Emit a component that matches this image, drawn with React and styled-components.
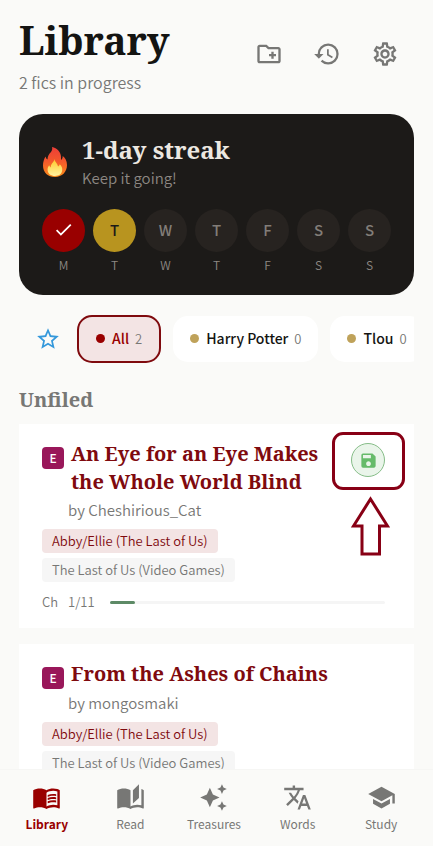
import React, { useState } from 'react'
import styled, { createGlobalStyle } from 'styled-components'
import {
  MdOutlineCreateNewFolder,
  MdHistory,
  MdOutlineSettings,
  MdStarBorder,
  MdSave,
  MdMenuBook,
  MdAutoStories,
  MdAutoAwesome,
  MdTranslate,
  MdSchool,
  MdCheck,
} from 'react-icons/md'

const color = {
  page: '#fafaf8',
  white: '#ffffff',
  ink: '#141412',
  dark: '#1c1a18',
  grey: '#777775',
  red: '#990000',
  deepRed: '#7f0a0e',
  blush: '#f3e4e4',
  gold: '#b8941f',
  marker: '#880015',
}

const sans = `"Noto Sans CJK SC", "Noto Sans", sans-serif`
const serif = `"Noto Serif", "DejaVu Serif", serif`

const days = [
  { letter: 'M', state: 'done' },
  { letter: 'T', state: 'today' },
  { letter: 'W' },
  { letter: 'T' },
  { letter: 'F' },
  { letter: 'S' },
  { letter: 'S' },
]

const folders = [
  { name: 'All', count: 2 },
  { name: 'Harry Potter', count: 0 },
  { name: 'Tlou', count: 0 },
]

const fics = [
  {
    title: 'An Eye for an Eye Makes the Whole World Blind',
    author: 'Cheshirious_Cat',
    ship: 'Abby/Ellie (The Last of Us)',
    fandom: 'The Last of Us (Video Games)',
    chapter: 1,
    total: 11,
    saved: true,
  },
  {
    title: 'From the Ashes of Chains',
    author: 'mongosmaki',
    ship: 'Abby/Ellie (The Last of Us)',
    fandom: 'The Last of Us (Video Games)',
  },
]

const tabs = [
  { text: 'Library', Icon: MdMenuBook },
  { text: 'Read', Icon: MdAutoStories },
  { text: 'Treasures', Icon: MdAutoAwesome },
  { text: 'Words', Icon: MdTranslate },
  { text: 'Study', Icon: MdSchool },
]

const Flame = () => (
  <svg width="26" height="30" viewBox="0 0 26 30" aria-hidden="true">
    <defs>
      <linearGradient id="flame" x1="0" y1="0" x2="0" y2="1">
        <stop offset="0" stopColor="#ec3d38" />
        <stop offset="0.45" stopColor="#f4572c" />
        <stop offset="1" stopColor="#fb8c1a" />
      </linearGradient>
      <linearGradient id="core" x1="0" y1="0" x2="0" y2="1">
        <stop offset="0" stopColor="#ffc928" />
        <stop offset="1" stopColor="#fff3a0" />
      </linearGradient>
    </defs>
    <path
      d="M10 0c5 1 9 5 9 10 0 1 0 2 .2 3 1-.8 1.6-2.200 1.500-4C23 10.500 25 14 25 18c0 7-5 12-12 12S1 25.500 1 18.500C1 15 2 12 3.500 9.500c.5 1.500 1 2.500 2 3C5.500 9 7 7 9 5c1.200-1.600 1.500-3.300 1-5z"
      fill="url(#flame)"
    />
    <path
      d="M12.500 12c.2 3 3 4 3.500 7.500 1-.5 1.500-1.200 1.700-2.200C19.500 19 20.500 21 20.200 23.300 19.800 27 17 29 13 29s-7.200-2.300-7.400-6c-.1-2 .6-3.500 1.600-4.700.3 1 .8 1.700 1.600 2.100C8.500 16.500 12 15.500 12.500 12z"
      fill="url(#core)"
    />
  </svg>
)

const FicCard = ({ fic }) => (
  <Card>
    <CardTop>
      <Rating>E</Rating>
      <FicTitle>{fic.title}</FicTitle>
      {fic.saved && (
        <SaveSpot>
          <SaveButton type="button" aria-label="Saved offline">
            <MdSave size={19} />
          </SaveButton>
          <Ring />
          <Arrow width="39" height="60" viewBox="0 0 39 60" aria-hidden="true">
            <path d="M19.500 3L2.500 30H11V58H28.500V30H36.500Z" />
          </Arrow>
        </SaveSpot>
      )}
    </CardTop>
    <Author>by {fic.author}</Author>
    <Tags>
      <Tag $ship>{fic.ship}</Tag>
      <Tag>{fic.fandom}</Tag>
    </Tags>
    {fic.chapter && (
      <Progress>
        <Chapter>
          Ch <Count>{fic.chapter}/{fic.total}</Count>
        </Chapter>
        <Track>
          <Fill style={{ width: `${(fic.chapter / fic.total) * 100}%` }} />
        </Track>
      </Progress>
    )}
  </Card>
)

const App = () => {
  const [folder, setFolder] = useState('All')
  const [tab, setTab] = useState('Library')

  return (
    <Screen>
      <GlobalStyle />
      <Main>
        <Header>
          <div>
            <PageTitle>Library</PageTitle>
            <Subtitle>2 fics in progress</Subtitle>
          </div>
          <Actions>
            <IconButton type="button" aria-label="New folder">
              <MdOutlineCreateNewFolder size={28} />
            </IconButton>
            <IconButton type="button" aria-label="History">
              <MdHistory size={28} />
            </IconButton>
            <IconButton type="button" aria-label="Settings">
              <MdOutlineSettings size={28} />
            </IconButton>
          </Actions>
        </Header>

        <Streak>
          <StreakTop>
            <Flame />
            <div>
              <StreakTitle>1-day streak</StreakTitle>
              <StreakText>Keep it going!</StreakText>
            </div>
          </StreakTop>
          <Week>
            {days.map((day, index) => (
              <Day key={index}>
                <Dot $state={day.state}>
                  {day.state === 'done' ? <MdCheck size={21} /> : day.letter}
                </Dot>
                <DayLabel>{day.letter}</DayLabel>
              </Day>
            ))}
          </Week>
        </Streak>

        <Folders>
          <StarButton type="button" aria-label="Favourites">
            <MdStarBorder size={26} />
          </StarButton>
          {folders.map((item) => (
            <Chip
              key={item.name}
              type="button"
              $active={item.name === folder}
              onClick={() => setFolder(item.name)}
            >
              <Bullet $active={item.name === folder} />
              {item.name}
              <ChipCount>{item.count}</ChipCount>
            </Chip>
          ))}
        </Folders>

        <SectionTitle>Unfiled</SectionTitle>
        <List>
          {fics.map((fic) => (
            <FicCard key={fic.title} fic={fic} />
          ))}
        </List>
      </Main>

      <Nav>
        {tabs.map(({ text, Icon }) => (
          <NavButton
            key={text}
            type="button"
            $active={text === tab}
            onClick={() => setTab(text)}
          >
            <Icon size={29} />
            {text}
          </NavButton>
        ))}
      </Nav>
    </Screen>
  )
}

const GlobalStyle = createGlobalStyle`
* {
  box-sizing: border-box;
}
body {
  margin: 0;
  background: ${color.page};
  color: ${color.ink};
  font-family: ${sans};
}
h1, h2, h3, p {
  margin: 0;
}
button {
  border: 0;
  padding: 0;
  background: none;
  font: inherit;
  color: inherit;
  cursor: pointer;
}
svg {
  flex: none;
}
`

const Screen = styled.div`
  display: flex;
  flex-direction: column;
  height: 100vh;
`

const Main = styled.main`
  flex: 1;
  min-height: 0;
  overflow-y: auto;
  scrollbar-width: none;
  padding: 15px 19px 0;
`

const Header = styled.header`
  display: flex;
  justify-content: space-between;
  align-items: flex-start;
`

const PageTitle = styled.h1`
  font: 700 39px/50px ${serif};
`

const Subtitle = styled.p`
  margin-top: 5px;
  font-size: 16px;
  line-height: 24px;
  font-weight: 350;
  color: ${color.grey};
`

const Actions = styled.div`
  display: flex;
  margin-top: 15px;
`

const IconButton = styled.button`
  display: flex;
  justify-content: center;
  align-items: center;
  width: 58px;
  height: 48px;
  color: ${color.grey};
`

const Streak = styled.section`
  margin-top: 20px;
  padding: 20px 23px 21px;
  border-radius: 24px;
  background: ${color.dark};
`

const StreakTop = styled.div`
  display: flex;
  align-items: center;
  gap: 14px;
`

const StreakTitle = styled.h2`
  font: 700 24px/32px ${serif};
  color: #ece8e1;
`

const StreakText = styled.p`
  font-size: 15px;
  line-height: 24px;
  font-weight: 350;
  color: #8d8883;
`

const Week = styled.div`
  display: flex;
  justify-content: space-between;
  margin-top: 19px;
`

const Day = styled.div`
  display: flex;
  flex-direction: column;
  align-items: center;
  gap: 4px;
`

const dotFill = { done: color.red, today: color.gold }
const dotText = { done: '#ffffff', today: color.dark }

const Dot = styled.div`
  display: flex;
  justify-content: center;
  align-items: center;
  width: 43px;
  height: 43px;
  border-radius: 50%;
  font-size: 15px;
  line-height: 20px;
  padding-bottom: 2px;
  font-weight: 500;
  background: ${({ $state }) => dotFill[$state] || '#272320'};
  color: ${({ $state }) => dotText[$state] || '#827d78'};
`

const DayLabel = styled.span`
  font-size: 12px;
  line-height: 18px;
  font-weight: 350;
  color: #8d8883;
`

const Folders = styled.div`
  display: flex;
  align-items: center;
  gap: 12px;
  margin-top: 20px;
  overflow-x: auto;
  scrollbar-width: none;
`

const StarButton = styled.button`
  display: flex;
  flex: none;
  justify-content: flex-end;
  width: 46px;
  padding-right: 4px;
  color: #3498db;
`

const Chip = styled.button`
  display: flex;
  flex: none;
  align-items: center;
  height: ${({ $active }) => ($active ? 48 : 46)}px;
  padding: 0 17px 2px;
  border: ${({ $active }) => ($active ? `2px solid ${color.deepRed}` : '0')};
  border-radius: 15px;
  background: ${({ $active }) => ($active ? color.blush : color.white)};
  color: ${({ $active }) => ($active ? color.red : color.ink)};
  font-size: 14px;
  font-weight: 500;
`

const Bullet = styled.span`
  width: 9px;
  height: 9px;
  margin-right: 7px;
  border-radius: 50%;
  background: ${({ $active }) => ($active ? color.red : '#bfa25a')};
`

const ChipCount = styled.span`
  margin-left: 6px;
  font-size: 13px;
  font-weight: 350;
  color: ${color.grey};
`

const SectionTitle = styled.h2`
  margin-top: 23px;
  font: 700 20px/28px ${serif};
  color: ${color.grey};
`

const List = styled.div`
  display: flex;
  flex-direction: column;
  gap: 16px;
  margin-top: 10px;
`

const Card = styled.article`
  padding: 16px 29px 14px 23px;
  background: ${color.white};
`

const CardTop = styled.div`
  display: flex;
  align-items: flex-start;
`

const Rating = styled.span`
  flex: none;
  width: 22px;
  height: 22px;
  margin: 7px 7px 0 0;
  border-radius: 4px;
  background: #99175a;
  color: ${color.white};
  font-size: 12px;
  font-weight: 500;
  line-height: 21px;
  text-align: center;
`

const FicTitle = styled.h3`
  flex: 1;
  font: 700 20px/28px ${serif};
  color: ${color.deepRed};
`

const SaveSpot = styled.div`
  position: relative;
  margin: 3px 0 0 29px;
`

const SaveButton = styled.button`
  display: flex;
  justify-content: center;
  align-items: center;
  width: 34px;
  height: 34px;
  border: 1px solid #86bd88;
  border-radius: 50%;
  background: #eaf5ea;
  color: #66bb6a;
`

/* hand-drawn style callout over the save button */
const Ring = styled.span`
  position: absolute;
  inset: -11px -20px -13px -19px;
  border: 3px solid ${color.marker};
  border-radius: 11px;
  pointer-events: none;
`

const Arrow = styled.svg`
  position: absolute;
  top: 53px;
  left: 0;
  fill: none;
  stroke: ${color.marker};
  stroke-width: 3;
`

const Author = styled.p`
  margin: 2px 0 7px 26px;
  font-size: 15px;
  line-height: 24px;
  font-weight: 350;
  color: ${color.grey};
`

const Tags = styled.div`
  display: flex;
  flex-direction: column;
  align-items: flex-start;
  gap: 5px;
`

const Tag = styled.span`
  padding: 0 10px;
  border-radius: 4px;
  font-size: 13px;
  line-height: 24px;
  font-weight: 350;
  background: ${({ $ship }) => ($ship ? color.blush : '#f6f6f6')};
  color: ${({ $ship }) => ($ship ? color.deepRed : color.grey)};
`

const Progress = styled.div`
  display: flex;
  align-items: center;
  gap: 11px;
  margin-top: 8px;
`

const Chapter = styled.span`
  display: flex;
  gap: 10px;
  font-size: 13px;
  line-height: 24px;
  font-weight: 350;
  color: ${color.grey};
`

const Count = styled.span`
  min-width: 31px;
`

const Track = styled.div`
  flex: 1;
  height: 3px;
  border-radius: 2px;
  background: #f5f5f5;
`

const Fill = styled.div`
  height: 100%;
  border-radius: 2px;
  background: #5d8a66;
`

const Nav = styled.nav`
  display: flex;
  flex: none;
  height: 77px;
  padding: 0 10px 0 5px;
  border-top: 1px solid #f6f6f4;
  background: ${color.page};
`

const NavButton = styled.button`
  display: flex;
  flex: 1;
  flex-direction: column;
  align-items: center;
  justify-content: center;
  gap: 2px;
  font-size: 12px;
  line-height: 20px;
  font-weight: ${({ $active }) => ($active ? 700 : 400)};
  color: ${({ $active }) => ($active ? color.red : color.grey)};
`

export default App
